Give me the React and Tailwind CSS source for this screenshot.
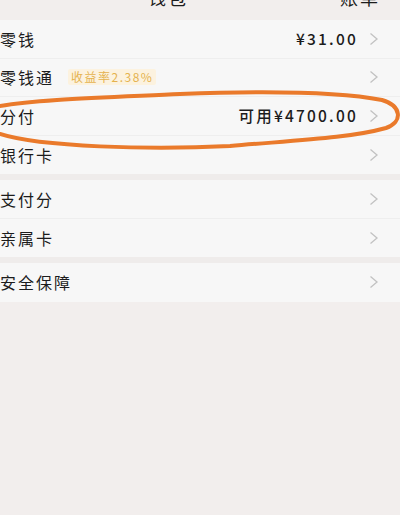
const FONT = { fontFamily: '"Noto Sans CJK SC", "Noto Sans", sans-serif' };

function Chevron() {
  return (
    <svg width="10" height="14" viewBox="0 0 10 14" className="shrink-0">
      <polyline points="1.5,1.5 8,7 1.5,12.5" fill="none" stroke="#c2c2c2" strokeWidth="1.3" />
    </svg>
  );
}

function Row({ label, value, badge, last }) {
  return (
    <div
      className={`flex items-center h-[38.5px] pr-[21px] ${last ? "" : "border-b border-[#eeeeee]"}`}
    >
      <span className="text-[16px] tracking-[2px] text-[#1c1c1c]">{label}</span>
      {badge && (
        <span className="ml-[14px] h-[16px] px-[3px] flex items-center rounded-[2px] bg-[#fcf2df] text-[12px] tracking-[1.5px] text-[#e5b24e]">
          {badge}
        </span>
      )}
      <span className="ml-auto mr-[11px] text-[15.5px] font-medium tracking-[2.2px] text-[#1c1c1c]">
        {value}
      </span>
      <Chevron />
    </div>
  );
}

export default function App() {
  return (
    <div className="relative w-[400px] h-[515px] bg-[#f2eeed] overflow-hidden" style={FONT}>
      <div className="h-[20px] overflow-hidden">
        <div className="flex mt-[-15px] h-[24px] items-center text-[18px] tracking-[2px] text-[#1c1c1c]">
          <span className="ml-[148px]">钱包</span>
          <span className="ml-auto mr-[20px]">账单</span>
        </div>
      </div>

      <div className="bg-[#f7f7f7]">
        <Row label="零钱" value="¥31.00" />
        <Row label="零钱通" badge="收益率2.38%" />
        <Row label="分付" value="可用¥4700.00" />
        <Row label="银行卡" last />
      </div>

      <div className="h-[6px] bg-[#efeceb]" />

      <div className="bg-[#f7f7f7]">
        <Row label="支付分" />
        <Row label="亲属卡" last />
      </div>

      <div className="h-[6px] bg-[#efeceb]" />

      <div className="bg-[#f7f7f7]">
        <Row label="安全保障" last />
      </div>

      <svg className="absolute left-0 top-0 pointer-events-none" width="400" height="515" viewBox="0 0 400 515">
        <path
          d="M -10 108 C 30 99, 120 97, 180 94 C 260 91, 340 92, 382 100 C 402 106, 403 122, 386 128 C 350 138, 300 140, 230 146 C 150 150, 40 147, 0 134 C -20 128, -20 112, -10 108 Z"
          fill="none"
          stroke="#ea7a2b"
          strokeWidth="4"
          strokeLinejoin="round"
        />
      </svg>
    </div>
  );
}
